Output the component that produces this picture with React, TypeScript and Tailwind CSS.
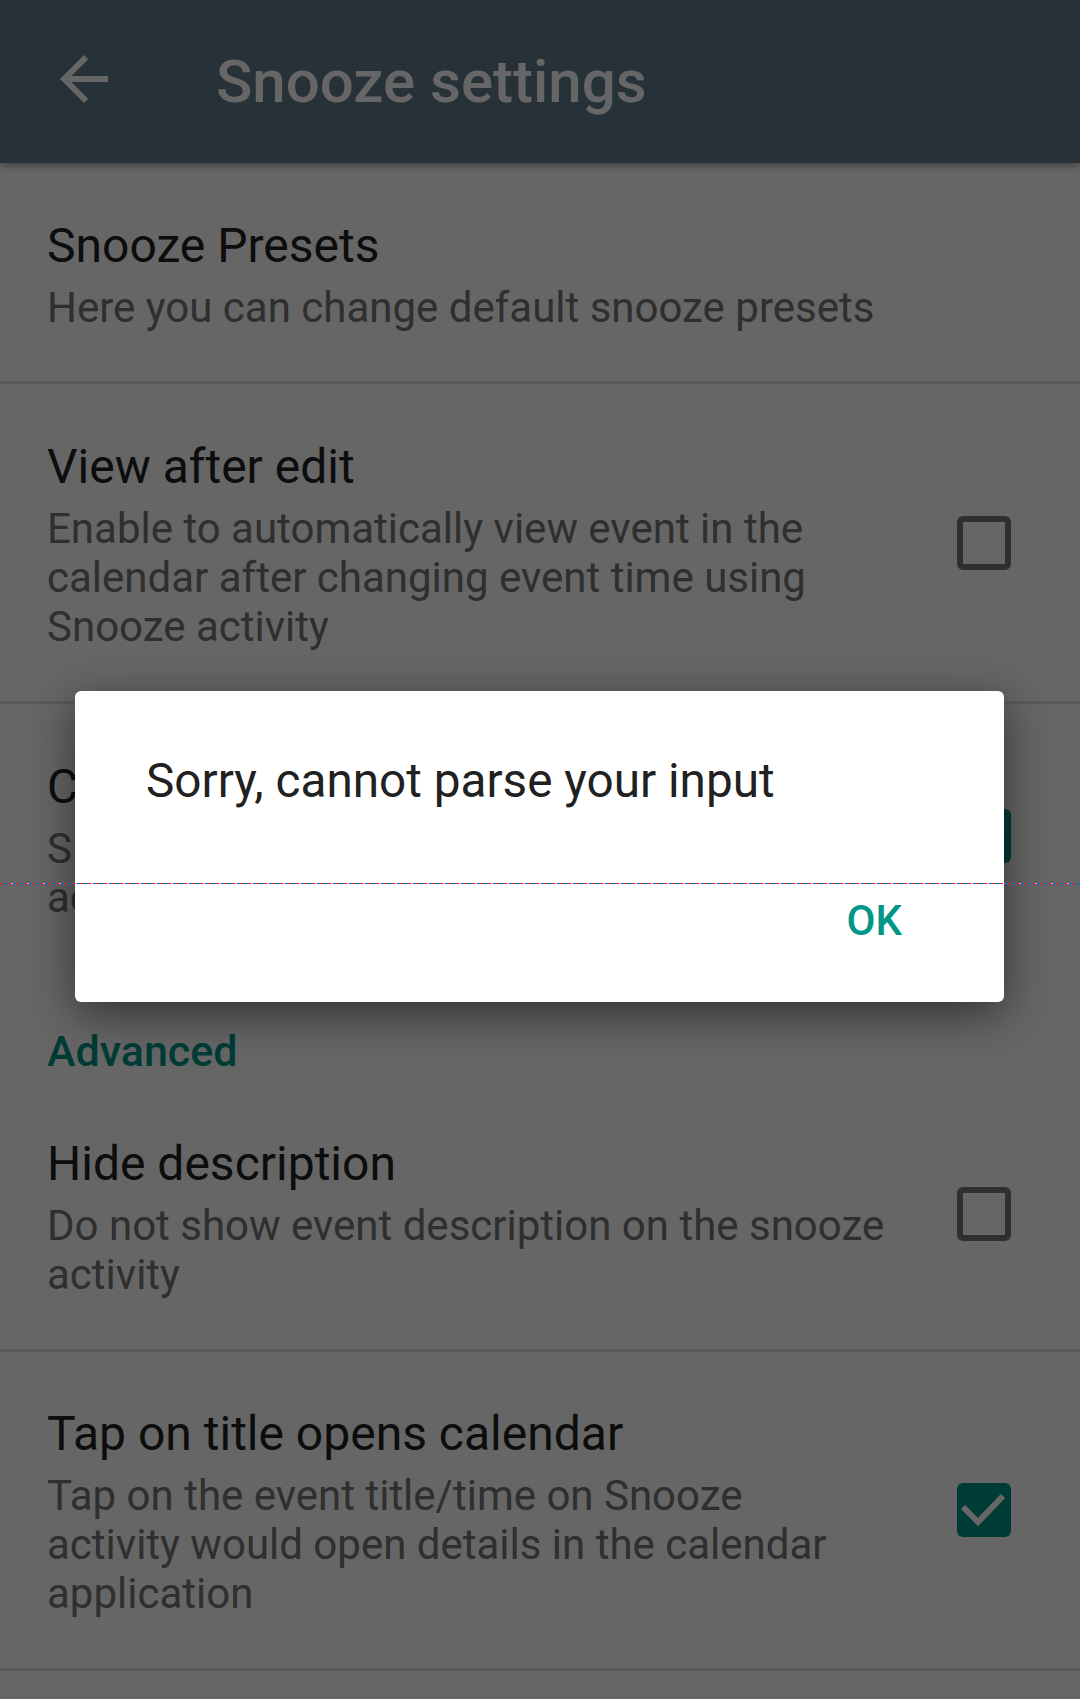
import React from "react";

type Item = {
  title: string;
  lines: string[];
  check?: "on" | "off";
  pt: number;
  pb: number;
};

function Checkbox({ on }: { on: boolean }) {
  if (on) {
    return (
      <div className="w-[54px] h-[54px] rounded-[6px] bg-[#009688] shrink-0">
        <svg width="54" height="54" viewBox="0 0 54 54">
          <path d="M6 24L21 39L46 13" fill="none" stroke="#ffffff" strokeWidth="6" />
        </svg>
      </div>
    );
  }
  return <div className="w-[54px] h-[54px] rounded-[6px] border-[6px] border-[#757575] shrink-0" />;
}

function Row({ item }: { item: Item }) {
  return (
    <div className="flex items-center">
      <div
        className="flex-1 pl-[47px]"
        style={{ paddingTop: item.pt, paddingBottom: item.pb }}
      >
        <div className="text-[48px] leading-[56px] text-[#212121] whitespace-nowrap">{item.title}</div>
        <div className="mt-[9px] text-[42px] leading-[49px] text-[#757575]">
          {item.lines.map((l, i) => (
            <div key={i} className="whitespace-nowrap">
              {l}
            </div>
          ))}
        </div>
      </div>
      {item.check && (
        <div className="mr-[69px]">
          <Checkbox on={item.check === "on"} />
        </div>
      )}
    </div>
  );
}

function Divider() {
  return <div className="h-[3px] bg-[#e0e0e0]" />;
}

export default function App() {
  return (
    <div className="relative w-[1080px] h-[1699px] overflow-hidden bg-white font-['Roboto',sans-serif]">
      <div className="relative z-10 h-[163px] bg-[#607d8b] flex items-center shadow-[0_3px_8px_rgba(0,0,0,0.35)]">
        <svg width="72" height="72" viewBox="0 0 24 24" className="ml-[48px] mb-[5px] shrink-0">
          <path
            d="M20 11H7.83l5.59-5.59L12 4l-8 8 8 8 1.41-1.41L7.83 13H20v-2z"
            fill="#ffffff"
          />
        </svg>
        <div className="ml-[96px] text-[60px] font-medium text-white leading-none">Snooze settings</div>
      </div>

      <Row
        item={{
          title: "Snooze Presets",
          lines: ["Here you can change default snooze presets"],
          pt: 55,
          pb: 49,
        }}
      />
      <Divider />
      <Row
        item={{
          title: "View after edit",
          lines: [
            "Enable to automatically view event in the",
            "calendar after changing event time using",
            "Snooze activity",
          ],
          check: "off",
          pt: 55,
          pb: 50,
        }}
      />
      <Divider />
      <Row
        item={{
          title: "Custom snooze options",
          lines: ["Show custom snooze and snooze until on the", "activity"],
          check: "on",
          pt: 55,
          pb: 46,
        }}
      />
      <div className="pt-[59px] pb-[3px] pl-[47px] text-[43px] leading-[49px] font-medium text-[#009688]">
        Advanced
      </div>
      <Row
        item={{
          title: "Hide description",
          lines: ["Do not show event description on the snooze", "activity"],
          check: "off",
          pt: 57,
          pb: 50,
        }}
      />
      <Divider />
      <Row
        item={{
          title: "Tap on title opens calendar",
          lines: [
            "Tap on the event title/time on Snooze",
            "activity would open details in the calendar",
            "application",
          ],
          check: "on",
          pt: 54,
          pb: 50,
        }}
      />
      <Divider />

      <div className="absolute inset-0 z-20 bg-black/60" />

      <div className="absolute z-30 left-[75px] top-[691px] w-[929px] h-[311px] bg-white rounded-[6px] shadow-[0_12px_45px_rgba(0,0,0,0.5)] flex flex-col">
        <div className="pt-[62px] pl-[71px] text-[47.7px] leading-[56px] text-[#212121]">
          Sorry, cannot parse your input
        </div>
        <div className="mt-[87px] flex justify-end pr-[102px]">
          <div className="text-[42px] leading-[49px] font-medium text-[#009688]">OK</div>
        </div>
      </div>

      <div className="absolute z-40 left-0 right-0 top-[883px] h-px bg-[repeating-linear-gradient(90deg,#ff1a1a_0px,#ff1a1a_3px,#1565d8_3px,#1565d8_8px,#ff1a1a_8px,#ff1a1a_11px,#7cc4ff_11px,#7cc4ff_13px,#1565d8_13px,#1565d8_16px)]" />
    </div>
  );
}
